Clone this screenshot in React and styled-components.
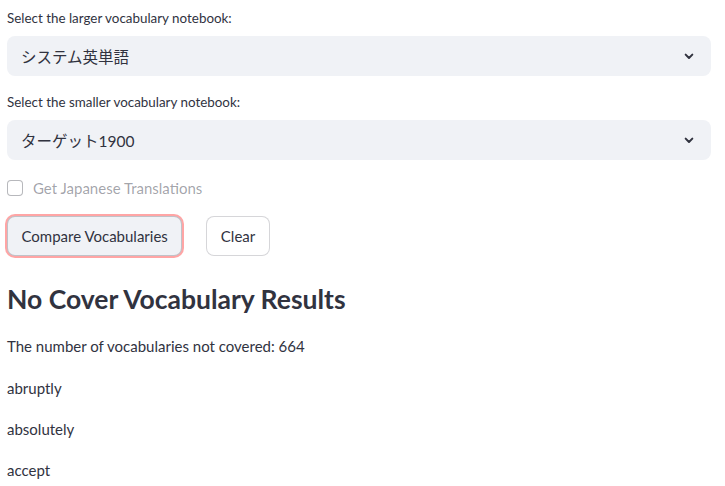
import styled, { createGlobalStyle } from "styled-components";

const GlobalStyle = createGlobalStyle`
  *, *::before, *::after { box-sizing: border-box; }
  body {
    margin: 0;
    background: #ffffff;
    font-family: "Source Sans Pro", Lato, "Noto Sans CJK JP", sans-serif;
    color: #31333f;
  }
`;

const Page = styled.main`
  padding: 6px 14px 0 7px;
  display: flex;
  flex-direction: column;
`;

const Field = styled.div`
  display: flex;
  flex-direction: column;
  gap: 6px;
  margin-bottom: ${(p) => p.$mb || 0}px;
`;

const Label = styled.label`
  height: 24px;
  display: flex;
  align-items: center;
  font-size: 13.4px;
  color: #31333f;
`;

const Select = styled.div`
  height: 40px;
  background: #f0f2f6;
  border-radius: 8px;
  display: flex;
  align-items: center;
  justify-content: space-between;
  padding: 0 14px 1px 14px;
  font-size: 15.5px;
  font-family: Lato, "Noto Sans CJK JP", sans-serif;
  color: #31333f;
  svg {
    width: 16px;
    height: 16px;
  }
`;

const CheckRow = styled.div`
  height: 24px;
  display: flex;
  align-items: center;
  gap: 10px;
  margin-bottom: 16px;
  font-size: 15px;
  color: rgba(49, 51, 63, 0.45);
`;

const Box = styled.span`
  width: 16px;
  height: 16px;
  border: 1px solid rgba(49, 51, 63, 0.35);
  border-radius: 4px;
  background: #fff;
`;

const Buttons = styled.div`
  display: flex;
  gap: 24px;
  margin-bottom: 28px;
`;

const Button = styled.button`
  height: 40px;
  padding: 0 13.5px;
  border-radius: 8px;
  font-family: inherit;
  font-size: 15px;
  color: #31333f;
  background: ${(p) => (p.$focused ? "#f0f2f6" : "#ffffff")};
  border: 1px solid
    ${(p) => (p.$focused ? "rgba(49,51,63,0.25)" : "rgba(49, 51, 63, 0.2)")};
  box-shadow: ${(p) =>
    p.$focused ? "0 0 0 2px rgba(255, 75, 75, 0.5)" : "none"};
`;

const Heading = styled.h2`
  margin: 0 0 10px;
  font-size: 26.5px;
  font-weight: 700;
  line-height: 1.2;
  color: #31333f;
`;

const Line = styled.p`
  margin: 0;
  height: 41.3px;
  display: flex;
  align-items: center;
  font-size: 15px;
`;

function Chevron() {
  return (
    <svg viewBox="0 0 24 24" fill="none" stroke="#31333f" strokeWidth="3" strokeLinecap="round" strokeLinejoin="round">
      <path d="M7 10l5 5 5-5" />
    </svg>
  );
}

export default function App() {
  const words = ["abruptly", "absolutely", "accept"];
  return (
    <>
      <GlobalStyle />
      <Page>
        <Field $mb={14}>
          <Label>Select the larger vocabulary notebook:</Label>
          <Select>
            <span>システム英単語</span>
            <Chevron />
          </Select>
        </Field>
        <Field $mb={16}>
          <Label>Select the smaller vocabulary notebook:</Label>
          <Select>
            <span>ターゲット1900</span>
            <Chevron />
          </Select>
        </Field>
        <CheckRow>
          <Box />
          <span>Get Japanese Translations</span>
        </CheckRow>
        <Buttons>
          <Button $focused>Compare Vocabularies</Button>
          <Button>Clear</Button>
        </Buttons>
        <Heading>No Cover Vocabulary Results</Heading>
        <Line>The number of vocabularies not covered: 664</Line>
        {words.map((w) => (
          <Line key={w}>{w}</Line>
        ))}
      </Page>
    </>
  );
}
